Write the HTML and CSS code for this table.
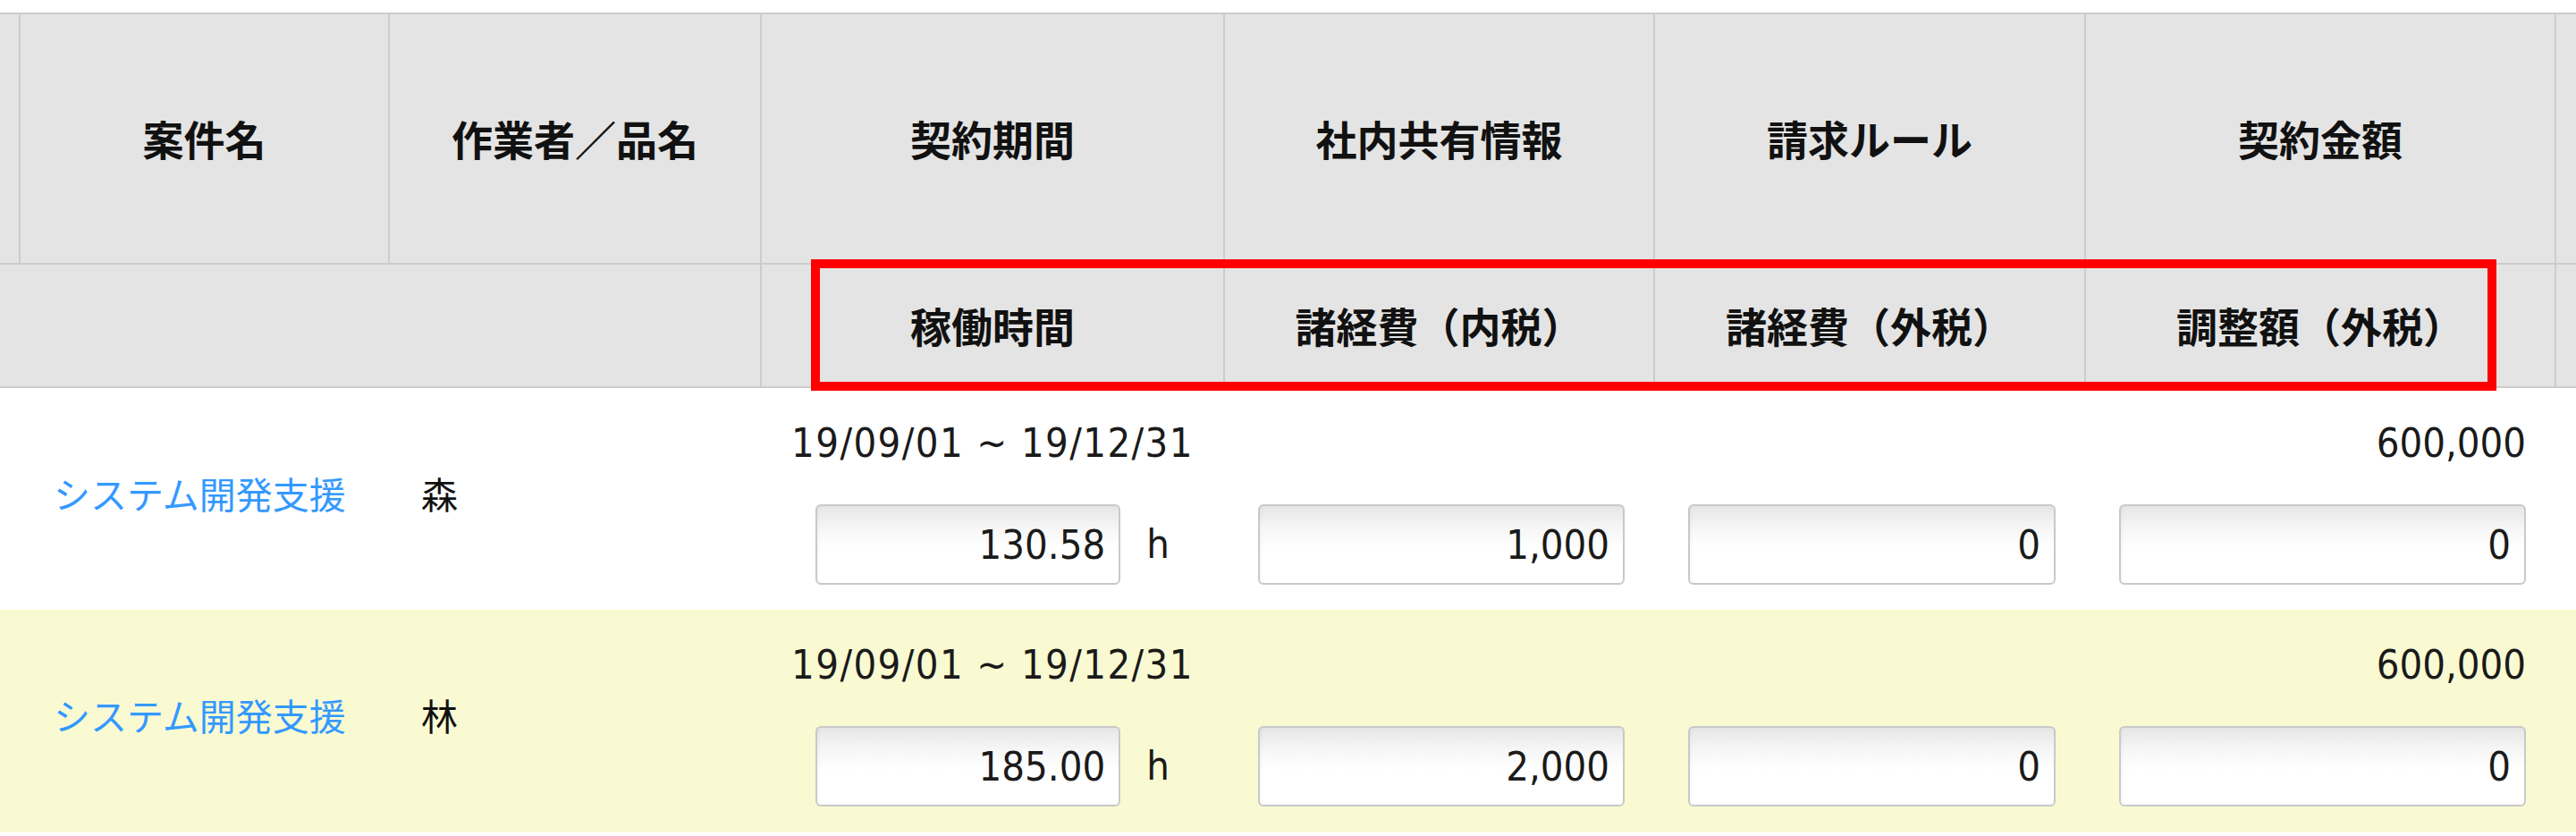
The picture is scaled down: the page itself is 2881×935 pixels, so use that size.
FILE: index.html
```html
<!DOCTYPE html>
<html lang="ja">
<head>
<meta charset="utf-8">
<title>契約一覧</title>
<link rel="stylesheet" href="styles.css">
</head>
<body>
<div class="page">
  <div class="sheet">
    <table class="grid">
      <colgroup>
        <col class="c0"><col class="c1"><col class="c2"><col class="c3"><col class="c4"><col class="c5"><col class="c6"><col class="c7">
      </colgroup>
      <thead>
        <tr class="h1">
          <th class="edge"></th>
          <th>案件名</th>
          <th>作業者／品名</th>
          <th>契約期間</th>
          <th>社内共有情報</th>
          <th>請求ルール</th>
          <th>契約金額</th>
          <th class="tail"></th>
        </tr>
        <tr class="h2">
          <th colspan="3" class="blank"></th>
          <th>稼働時間</th>
          <th>諸経費（内税）</th>
          <th>諸経費（外税）</th>
          <th>調整額（外税）</th>
          <th class="tail"></th>
        </tr>
      </thead>
      <tbody>
        <tr class="row">
          <td></td>
          <td class="name"><a href="#">システム開発支援</a></td>
          <td class="worker">森</td>
          <td class="period">
            <div class="line center date">19/09/01 ~ 19/12/31</div>
            <div class="hours"><input class="num hours-input" type="text" value="130.58"><span class="unit">h</span></div>
          </td>
          <td class="field"><div class="line"></div><input class="num" type="text" value="1,000"></td>
          <td class="field"><div class="line"></div><input class="num" type="text" value="0"></td>
          <td class="field"><div class="line right">600,000</div><input class="num" type="text" value="0"></td>
          <td></td>
        </tr>
        <tr class="row alt">
          <td></td>
          <td class="name"><a href="#">システム開発支援</a></td>
          <td class="worker">林</td>
          <td class="period">
            <div class="line center date">19/09/01 ~ 19/12/31</div>
            <div class="hours"><input class="num hours-input" type="text" value="185.00"><span class="unit">h</span></div>
          </td>
          <td class="field"><div class="line"></div><input class="num" type="text" value="2,000"></td>
          <td class="field"><div class="line"></div><input class="num" type="text" value="0"></td>
          <td class="field"><div class="line right">600,000</div><input class="num" type="text" value="0"></td>
          <td></td>
        </tr>
      </tbody>
    </table>
    <div class="highlight"></div>
  </div>
</div>
</body>
</html>
```

FILE: styles.css
```css
html, body {
  margin: 0;
  padding: 0;
  background: #ffffff;
  overflow: hidden;
}

.page {
  width: 2881px;
  height: 935px;
  overflow: hidden;
  padding-top: 14px;
  box-sizing: border-box;
  font-family: "Noto Sans CJK JP", "Noto Sans", sans-serif;
  color: #1a1a1a;
}

.sheet {
  position: relative;
  width: 2958px;
}

.grid {
  width: 2958px;
  table-layout: fixed;
  border-collapse: collapse;
  border-spacing: 0;
}

.c0 { width: 22px; }
.c1 { width: 413px; }
.c2 { width: 416px; }
.c3 { width: 518px; }
.c4 { width: 481px; }
.c5 { width: 482px; }
.c6 { width: 526px; }
.c7 { width: 100px; }

.grid thead th {
  background: #e4e4e4;
  border: 2px solid #cccccc;
  padding: 0;
  font-family: "Noto Sans CJK JP", sans-serif;
  font-weight: 700;
  font-size: 46px;
  line-height: 1.2;
  color: #111111;
  text-align: center;
  vertical-align: middle;
  white-space: nowrap;
}

.grid thead th.edge {
  border-left: none;
}

.grid thead th.blank {
  border-left: none;
}

.h1 th {
  height: 278px;
  padding-bottom: 6px;
}

.h2 th {
  height: 136px;
  padding-bottom: 6px;
}

.row {
  height: 249px;
}

.row td {
  padding: 0;
  vertical-align: top;
  background: #ffffff;
}

.row.alt td {
  background: #fafad2;
}

.row td.name,
.row td.worker {
  vertical-align: middle;
  padding-bottom: 13px;
  font-size: 41px;
  line-height: 1.2;
  white-space: nowrap;
}

.row td.name {
  padding-left: 38px;
}

.row td.worker {
  padding-left: 36px;
  color: #111111;
}

.name a {
  color: #3399ff;
  text-decoration: none;
}

.row td.period,
.row td.field {
  padding: 32px 33px 0 38px;
}

.line {
  height: 60px;
  line-height: 60px;
  margin-bottom: 38px;
  font-family: "DejaVu Sans Condensed", "Noto Sans", sans-serif;
  font-size: 45px;
  color: #1a1a1a;
  white-space: nowrap;
}

.line.center {
  text-align: center;
  margin-left: -38px;
  margin-right: -33px;
}

.line.date {
  letter-spacing: 1.4px;
}

.line.right {
  text-align: right;
}

.hours {
  display: flex;
  justify-content: center;
  align-items: center;
  gap: 29px;
  margin-left: -38px;
  margin-right: -33px;
}

.num {
  display: block;
  width: 100%;
  height: 90px;
  box-sizing: border-box;
  margin: 0;
  padding: 0 15px 0 10px;
  border: 2px solid #c9c9c9;
  border-radius: 6px;
  background: linear-gradient(to bottom, #e6e6e6 0%, #f6f6f6 28%, #ffffff 55%, #ffffff 100%);
  box-shadow: inset 2px 0 3px rgba(0, 0, 0, 0.03);
  font-family: "DejaVu Sans Condensed", "Noto Sans", sans-serif;
  font-size: 45px;
  color: #1a1a1a;
  text-align: right;
  outline: none;
}

.hours-input {
  width: 341px;
  flex: 0 0 341px;
}

.unit {
  font-family: "DejaVu Sans Condensed", "Noto Sans", sans-serif;
  font-size: 45px;
  color: #1a1a1a;
  line-height: 60px;
}

.highlight {
  position: absolute;
  left: 907px;
  top: 276px;
  width: 1885px;
  height: 147px;
  box-sizing: border-box;
  border: 10px solid #ff0000;
  pointer-events: none;
}
```
